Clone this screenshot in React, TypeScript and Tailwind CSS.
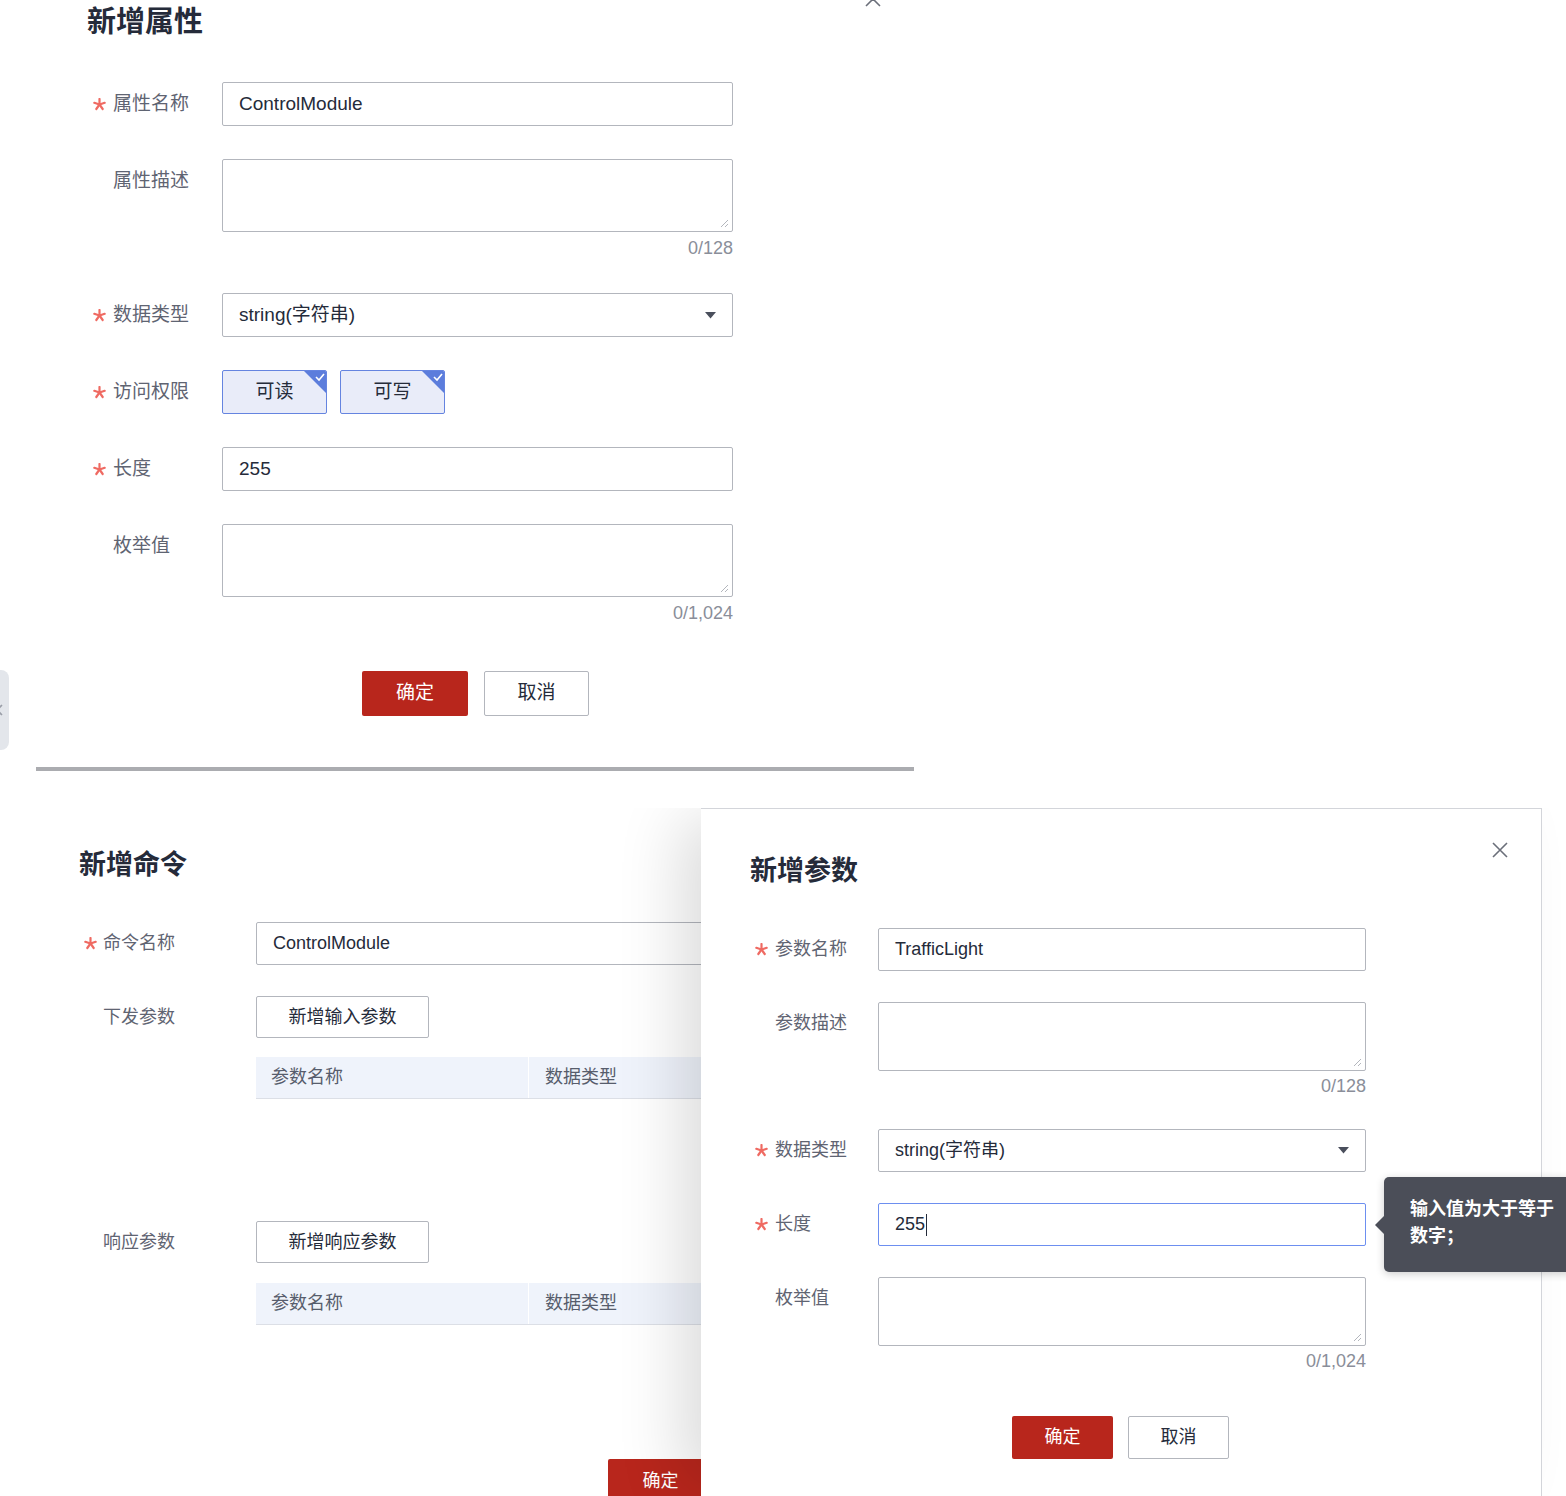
import React from "react";

const Star = ({ w }: { w: string }) => (
  <span className={`${w} shrink-0 flex items-center`}>
    <svg width="13" height="13" viewBox="0 0 13 13">
      <g stroke="#ef6a62" strokeWidth="2.2" strokeLinecap="round">
        <path d="M6.5 6.5 L6.5 1" />
        <path d="M6.5 6.5 L11.7 4.8" />
        <path d="M6.5 6.5 L9.7 11" />
        <path d="M6.5 6.5 L3.3 11" />
        <path d="M6.5 6.5 L1.3 4.8" />
      </g>
    </svg>
  </span>
);

function Label({ text, required, colW, starW, tall, size }: { text: string; required?: boolean; colW: string; starW: string; tall: string; size: string }) {
  return (
    <div className={`${colW} ${tall} shrink-0 flex items-center`}>
      {required ? <Star w={starW} /> : <span className={`${starW} shrink-0`} />}
      <span className={`${size} text-[#5f6472] whitespace-nowrap`}>{text}</span>
    </div>
  );
}

const Resize = () => (
  <svg className="absolute right-[3px] bottom-[3px]" width="9" height="9" viewBox="0 0 9 9">
    <path d="M8 1 L1 8 M8 5 L5 8" stroke="#b3b6bd" strokeWidth="1" />
  </svg>
);

const Caret = () => (
  <svg width="11" height="7" viewBox="0 0 11 7">
    <path d="M0 0 H11 L5.5 6.5 Z" fill="#4a4f5c" />
  </svg>
);

const CloseX = ({ className }: { className: string }) => (
  <svg className={className} width="18" height="18" viewBox="0 0 18 18">
    <path d="M2 2 L16 16 M16 2 L2 16" stroke="#6b6f7a" strokeWidth="1.6" />
  </svg>
);

function CheckBtn({ text }: { text: string }) {
  return (
    <div className="relative w-[105px] h-[44px] border border-[#6584e0] bg-[#e9ecf9] rounded-[2px] flex items-center justify-center text-[19px] text-[#252b3a] overflow-hidden">
      {text}
      <svg className="absolute right-0 top-0" width="22" height="22" viewBox="0 0 22 22">
        <path d="M0 0 H22 V22 Z" fill="#5c7ddc" />
        <path d="M12 6 L15 9 L20 3" stroke="white" strokeWidth="1.6" fill="none" />
      </svg>
    </div>
  );
}

export default function App() {
  const box = "border border-[#b3b6bd] rounded-[2px] bg-white";
  return (
    <div className="w-[1566px] h-[1496px] overflow-hidden bg-white font-['Liberation_Sans','Noto_Sans_CJK_SC',sans-serif] text-[#252b3a]">
      {/* Top section */}
      <div className="relative h-[767px]">
        <CloseX className="absolute left-[864px] top-[-10px]" />
        <div className="absolute left-[-20px] top-[670px] w-[29px] h-[80px] rounded-[8px] bg-[#e3e6eb] flex items-center justify-end pr-[6px]">
          <svg width="8" height="12" viewBox="0 0 8 12"><path d="M7 1 L2 6 L7 11" stroke="#9a9ea8" strokeWidth="1.6" fill="none" /></svg>
        </div>
        <div className="pl-[87px] pt-[4px]">
          <h1 className="h-[36px] leading-[36px] text-[29px] font-bold text-[#252b3a]">新增属性</h1>
          <div className="pl-[6px]">
            <div className="mt-[42px] flex">
              <Label text="属性名称" required colW="w-[129px]" starW="w-[20px]" tall="h-[44px]" size="text-[19px]" />
              <div className={`${box} w-[511px] h-[44px] flex items-center px-[16px] text-[19px]`}>ControlModule</div>
            </div>
            <div className="mt-[33px] flex">
              <Label text="属性描述" colW="w-[129px]" starW="w-[20px]" tall="h-[44px]" size="text-[19px]" />
              <div className="w-[511px]">
                <div className={`${box} relative h-[73px]`}><Resize /></div>
                <div className="mt-[6px] h-[20px] leading-[20px] text-right text-[18px] text-[#8a8e99]">0/128</div>
              </div>
            </div>
            <div className="mt-[35px] flex">
              <Label text="数据类型" required colW="w-[129px]" starW="w-[20px]" tall="h-[44px]" size="text-[19px]" />
              <div className={`${box} w-[511px] h-[44px] flex items-center justify-between pl-[16px] pr-[16px] text-[19px]`}>
                <span>string(字符串)</span>
                <Caret />
              </div>
            </div>
            <div className="mt-[33px] flex">
              <Label text="访问权限" required colW="w-[129px]" starW="w-[20px]" tall="h-[44px]" size="text-[19px]" />
              <div className="flex gap-[13px]">
                <CheckBtn text="可读" />
                <CheckBtn text="可写" />
              </div>
            </div>
            <div className="mt-[33px] flex">
              <Label text="长度" required colW="w-[129px]" starW="w-[20px]" tall="h-[44px]" size="text-[19px]" />
              <div className={`${box} w-[511px] h-[44px] flex items-center px-[16px] text-[19px]`}>255</div>
            </div>
            <div className="mt-[33px] flex">
              <Label text="枚举值" colW="w-[129px]" starW="w-[20px]" tall="h-[44px]" size="text-[19px]" />
              <div className="w-[511px]">
                <div className={`${box} relative h-[73px]`}><Resize /></div>
                <div className="mt-[6px] h-[20px] leading-[20px] text-right text-[18px] text-[#8a8e99]">0/1,024</div>
              </div>
            </div>
            <div className="mt-[48px] flex">
              <div className="w-[269px] shrink-0" />
              <div className="flex gap-[16px]">
                <div className="w-[106px] h-[45px] rounded-[2px] bg-[#b8261c] text-white text-[19px] flex items-center justify-center">确定</div>
                <div className="w-[105px] h-[45px] rounded-[2px] border border-[#b3b6bd] bg-white text-[19px] text-[#252b3a] flex items-center justify-center">取消</div>
              </div>
            </div>
          </div>
        </div>
      </div>
      <div className="ml-[36px] w-[878px] h-[4px] bg-[#abacb0]" />
      <div className="h-[37px]" />

      {/* Bottom section */}
      <div className="relative h-[688px] overflow-hidden">
        {/* Left panel (behind) */}
        <div className="pl-[79px] pt-[39px]">
          <h2 className="h-[36px] leading-[36px] text-[27px] font-bold text-[#252b3a]">新增命令</h2>
          <div className="pl-[5px]">
            <div className="mt-[39px] flex">
              <Label text="命令名称" required colW="w-[172px]" starW="w-[19px]" tall="h-[43px]" size="text-[18px]" />
              <div className={`${box} w-[620px] h-[43px] flex items-center px-[16px] text-[18px]`}>ControlModule</div>
            </div>
            <div className="mt-[31px] flex">
              <Label text="下发参数" colW="w-[172px]" starW="w-[19px]" tall="h-[42px]" size="text-[18px]" />
              <div className={`${box} w-[173px] h-[42px] flex items-center justify-center text-[18px]`}>新增输入参数</div>
            </div>
            <div className="mt-[19px] ml-[172px] flex h-[42px] w-[620px] bg-[#eff3fb] border-b border-[#dcdfe6] text-[18px] text-[#575d6c]">
              <div className="w-[273px] border-r border-white flex items-center pl-[15px]">参数名称</div>
              <div className="flex-1 flex items-center pl-[16px]">数据类型</div>
            </div>
            <div className="mt-[122px] flex">
              <Label text="响应参数" colW="w-[172px]" starW="w-[19px]" tall="h-[42px]" size="text-[18px]" />
              <div className={`${box} w-[173px] h-[42px] flex items-center justify-center text-[18px]`}>新增响应参数</div>
            </div>
            <div className="mt-[20px] ml-[172px] flex h-[42px] w-[620px] bg-[#eff3fb] border-b border-[#dcdfe6] text-[18px] text-[#575d6c]">
              <div className="w-[273px] border-r border-white flex items-center pl-[15px]">参数名称</div>
              <div className="flex-1 flex items-center pl-[16px]">数据类型</div>
            </div>
            <div className="mt-[134px] ml-[524px] w-[105px] h-[45px] rounded-[2px] bg-[#b8261c] text-white text-[18px] flex items-center justify-center">确定</div>
          </div>
        </div>

        {/* Right drawer panel */}
        <div className="absolute left-[701px] top-0 w-[841px] h-[688px] bg-white border-t border-r border-[#d3d5da] shadow-[-30px_0_60px_-10px_rgba(0,0,0,0.14)]">
          <CloseX className="absolute left-[790px] top-[32px]" />
          <div className="pl-[49px] pt-[44px]">
            <h2 className="h-[36px] leading-[36px] text-[27px] font-bold text-[#252b3a]">新增参数</h2>
            <div className="pl-[5px]">
              <div className="mt-[39px] flex">
                <Label text="参数名称" required colW="w-[123px]" starW="w-[20px]" tall="h-[43px]" size="text-[18px]" />
                <div className={`${box} w-[488px] h-[43px] flex items-center px-[16px] text-[18px]`}>TrafficLight</div>
              </div>
              <div className="mt-[31px] flex">
                <Label text="参数描述" colW="w-[123px]" starW="w-[20px]" tall="h-[43px]" size="text-[18px]" />
                <div className="w-[488px]">
                  <div className={`${box} relative h-[69px]`}><Resize /></div>
                  <div className="mt-[5px] h-[20px] leading-[20px] text-right text-[18px] text-[#8a8e99]">0/128</div>
                </div>
              </div>
              <div className="mt-[33px] flex">
                <Label text="数据类型" required colW="w-[123px]" starW="w-[20px]" tall="h-[43px]" size="text-[18px]" />
                <div className={`${box} w-[488px] h-[43px] flex items-center justify-between px-[16px] text-[18px]`}>
                  <span>string(字符串)</span>
                  <Caret />
                </div>
              </div>
              <div className="mt-[31px] flex">
                <Label text="长度" required colW="w-[123px]" starW="w-[20px]" tall="h-[43px]" size="text-[18px]" />
                <div className="w-[488px] h-[43px] border border-[#6d8ff0] rounded-[2px] bg-white flex items-center px-[16px] text-[18px]">
                  <span>255</span>
                  <span className="ml-[1px] w-[1px] h-[22px] bg-[#252b3a]" />
                </div>
              </div>
              <div className="mt-[31px] flex">
                <Label text="枚举值" colW="w-[123px]" starW="w-[20px]" tall="h-[43px]" size="text-[18px]" />
                <div className="w-[488px]">
                  <div className={`${box} relative h-[69px]`}><Resize /></div>
                  <div className="mt-[5px] h-[20px] leading-[20px] text-right text-[18px] text-[#8a8e99]">0/1,024</div>
                </div>
              </div>
              <div className="mt-[45px] flex">
                <div className="w-[257px] shrink-0" />
                <div className="flex gap-[15px]">
                  <div className="w-[101px] h-[43px] rounded-[2px] bg-[#b8261c] text-white text-[18px] flex items-center justify-center">确定</div>
                  <div className="w-[101px] h-[43px] rounded-[2px] border border-[#b3b6bd] bg-white text-[18px] text-[#252b3a] flex items-center justify-center">取消</div>
                </div>
              </div>
            </div>
          </div>
        </div>

        {/* Tooltip */}
        <div className="absolute left-[1384px] top-[369px] w-[200px] h-[95px] rounded-[5px] bg-[#4b4e58] shadow-[0_2px_8px_rgba(0,0,0,0.2)] pl-[26px] pt-[19px] text-white text-[18px] font-bold leading-[27px] whitespace-nowrap">
          <div>输入值为大于等于</div>
          <div>数字；</div>
        </div>
        <div className="absolute left-[1375px] top-[408px] w-0 h-0 border-y-[9px] border-y-transparent border-r-[9px] border-r-[#4b4e58]" />
      </div>
    </div>
  );
}
